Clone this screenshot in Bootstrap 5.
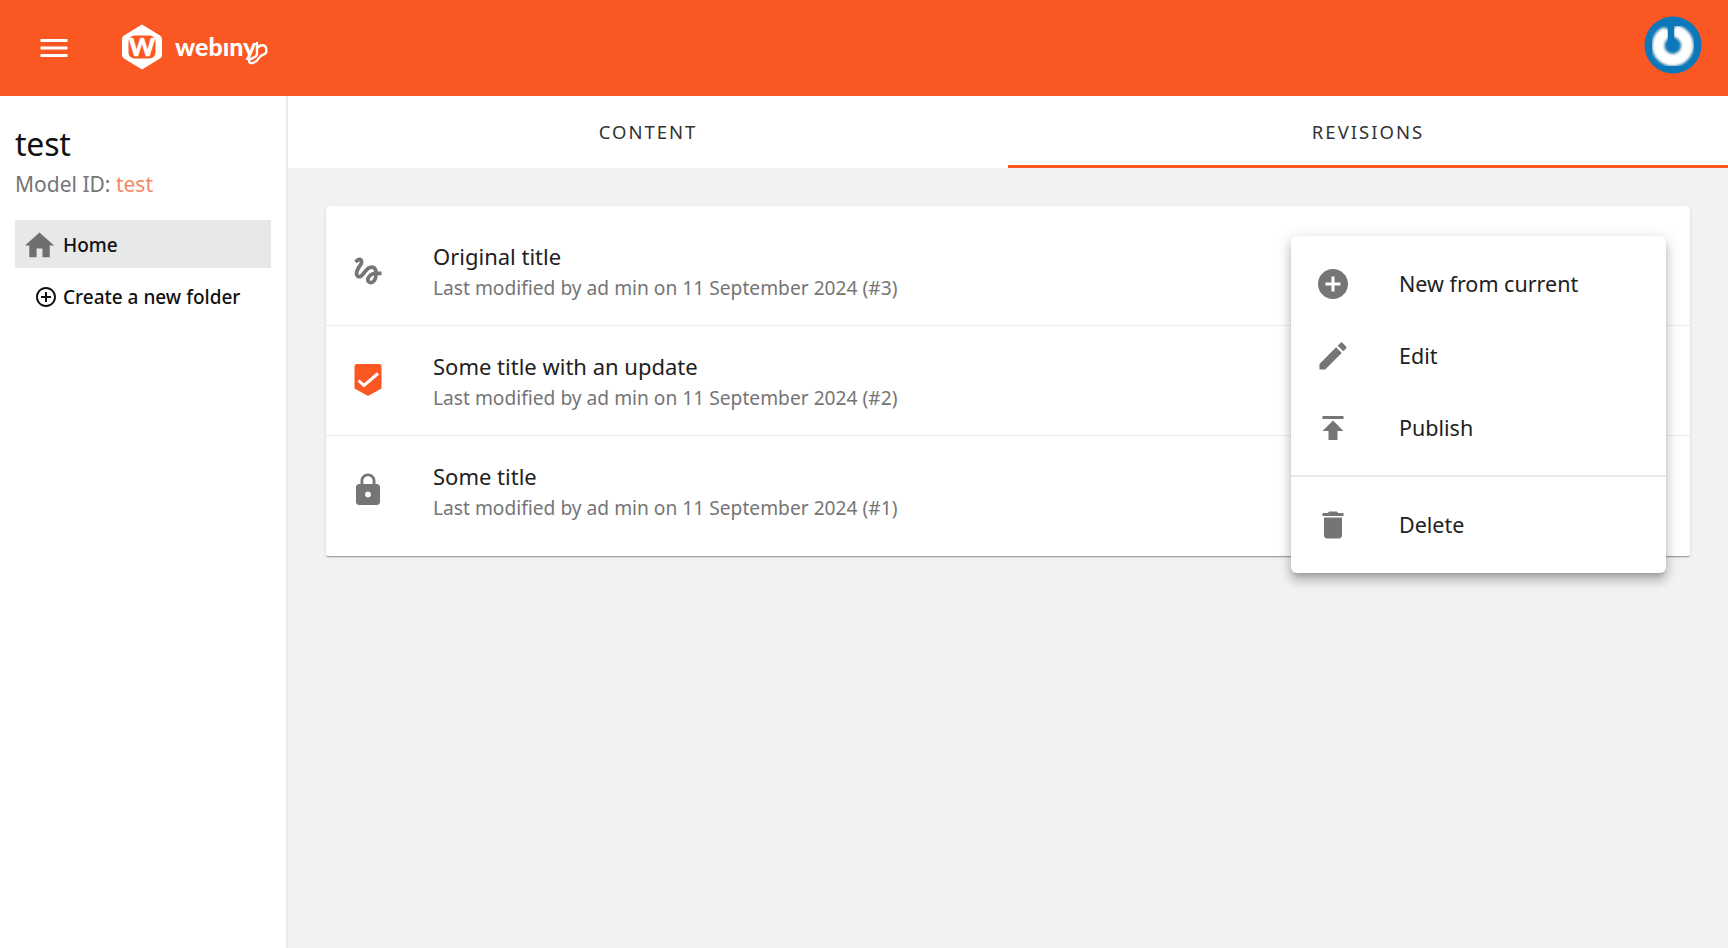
<!doctype html>
<html lang="en">
<head>
<meta charset="utf-8">
<title>Webiny</title>
<link href="https://cdn.jsdelivr.net/npm/bootstrap@5.3.0/dist/css/bootstrap.min.css" rel="stylesheet">
<style>
:root{--wb-orange:#fa5723;}
html,body{height:100%;}
body{font-family:"Noto Sans","Liberation Sans",sans-serif;background:#fff;color:#212121;overflow:hidden;}
.wb-top{height:96px;background:var(--wb-orange);padding-left:36px;padding-right:26px;}
.wb-burger{width:36px;height:36px;fill:#fff;}
.wb-logo{margin-left:47px;margin-top:-3px;gap:10px;}
.wb-hex{width:46px;height:46px;}
.wb-w{font-family:Lato,sans-serif;font-weight:900;font-size:25px;line-height:1;color:#fff;-webkit-text-stroke:.5px #fff;}
.wb-word{font-family:Lato,sans-serif;font-weight:900;font-size:25px;color:#fff;line-height:1;}
.wb-tail{margin-left:-22px;margin-top:10px;width:26px;height:26px;}
.wb-avatar{width:58px;height:58px;margin-top:-6px;}
.wb-side{width:288px;flex:0 0 288px;border-right:2px solid #e8e8e8;padding:26px 15px;}
.wb-name{font-size:32px;line-height:44px;color:#111;margin:0;letter-spacing:-.2px;}
.wb-model{font-size:21px;line-height:30px;color:#757575;margin-top:3px;}
.wb-model span{color:#f68767;}
.wb-home{height:48px;margin-top:21px;background:#e8e8e8;padding:2px 0 0 7px;font-size:19px;font-weight:500;color:#111;gap:6px;}
.wb-home svg{width:35px;height:35px;fill:#6f6f6f;}
.wb-folder{height:48px;margin-top:5px;padding-left:19px;font-size:19px;font-weight:500;color:#111;gap:5px;}
.wb-folder svg{width:24px;height:24px;fill:#111;}
.wb-main{background:#f2f2f2;min-width:0;}
.wb-tabs{height:72px;background:#fff;flex-wrap:nowrap;}
.wb-tabs .nav-link{height:72px;padding:2px 0 0;font-size:18.5px;letter-spacing:2px;color:#333;display:flex;align-items:center;justify-content:center;border-bottom:3px solid transparent;border-radius:0;}
.wb-tabs .nav-link.active{border-bottom-color:var(--wb-orange);color:#333;}
.wb-card{margin:38px 38px 0;border:0;border-radius:2px;padding:10px 0;box-shadow:0 2px 1px -1px rgba(0,0,0,.2),0 1px 1px 0 rgba(0,0,0,.14),0 1px 3px 0 rgba(0,0,0,.12);}
.wb-row{height:110px;padding:0 0 0 24px;border:0;border-bottom:2px solid #ececec;border-radius:0;gap:47px;}
.wb-row:last-child{border-bottom:0;padding-bottom:2px;}
.wb-ico{width:36px;height:36px;flex:none;fill:#757575;}
.wb-txt{padding-top:3px;}
.wb-t{font-size:22px;line-height:31px;color:#212121;}
.wb-s{font-size:19.2px;line-height:31px;color:#757575;}
.wb-menu{display:block;top:140px;left:1003px;width:375px;padding:12px 0 0;height:337px;margin:0;border:0;border-radius:6px;box-shadow:0 5px 5px -3px rgba(0,0,0,.2),0 8px 10px 1px rgba(0,0,0,.14),0 3px 14px 2px rgba(0,0,0,.12);}
.wb-menu .dropdown-item{height:72px;padding:0 0 0 24px;gap:48px;font-size:21.5px;color:#212121;}
.wb-menu .dropdown-divider{margin:11px 0 12px;border-color:#e8e8e8;border-top-width:2px;opacity:1;}
.wb-menu svg{width:36px;height:36px;flex:none;fill:#757575;}
</style>
</head>
<body class="d-flex flex-column">
<header class="wb-top d-flex align-items-center flex-none">
  <svg class="wb-burger" viewBox="0 0 24 24"><path d="M3 18h18v-2H3v2zm0-5h18v-2H3v2zm0-7v2h18V6H3z"/></svg>
  <div class="wb-logo d-flex align-items-center">
    <span class="position-relative d-inline-flex align-items-center justify-content-center wb-hex">
      <svg class="position-absolute top-0 start-0 wb-hex" viewBox="0 0 46 46"><path d="M23 .5 41 11.500Q43 12.700 43 15V31Q43 33.300 41 34.500L23 45.500 5 34.500Q3 33.300 3 31V15Q3 12.700 5 11.500Z" fill="#fff"/><rect x="9.500" y="11.500" width="27" height="23" rx="6" fill="#fa5723"/></svg>
      <span class="position-relative wb-w">W</span>
    </span>
    <span class="wb-word">webıny</span>
    <svg class="wb-tail" viewBox="0 0 26 26"><path d="M13 4V15C13 19 5 19 5 22C5 26 12 24 15 19C18 14 24 17 22 9C21 5 16 6 14.500 8" fill="none" stroke="#fff" stroke-width="2.400" stroke-linecap="round"/></svg>
  </div>
  <svg class="wb-avatar ms-auto" viewBox="0 0 58 58">
    <defs><filter id="wbsoft" x="-20%" y="-20%" width="140%" height="140%"><feGaussianBlur stdDeviation=".8"/></filter></defs>
    <circle cx="29" cy="29" r="28.500" fill="#0d78b9"/>
    <g filter="url(#wbsoft)">
      <path d="M20 18A14.500 14.500 0 1 0 34 16" fill="none" stroke="#d5dadd" stroke-width="13" stroke-linecap="round"/>
      <path d="M20 18A14.500 14.500 0 1 0 34 16" fill="none" stroke="#fff" stroke-width="10" stroke-linecap="round"/>
    </g>
    <path d="M27 8V31" stroke="#0d78b9" stroke-width="6.500"/>
  </svg>
</header>
<div class="d-flex flex-grow-1 position-relative">
  <aside class="wb-side">
    <h1 class="wb-name fw-normal">test</h1>
    <div class="wb-model">Model ID: <span>test</span></div>
    <div class="wb-home d-flex align-items-center">
      <svg viewBox="0 0 24 24"><path d="M10 20v-6h4v6h5v-8h3L12 3 2 12h3v8z"/></svg>Home
    </div>
    <div class="wb-folder d-flex align-items-center">
      <svg viewBox="0 0 24 24"><path d="M13 7h-2v4H7v2h4v4h2v-4h4v-2h-4V7zm-1-5C6.480 2 2 6.480 2 12s4.480 10 10 10 10-4.480 10-10S17.520 2 12 2zm0 18c-4.410 0-8-3.590-8-8s3.590-8 8-8 8 3.590 8 8-3.590 8-8 8z"/></svg>Create a new folder
    </div>
  </aside>
  <main class="wb-main flex-grow-1 position-relative">
    <ul class="nav nav-justified wb-tabs">
      <li class="nav-item"><a class="nav-link" href="#">CONTENT</a></li>
      <li class="nav-item"><a class="nav-link active" href="#">REVISIONS</a></li>
    </ul>
    <div class="card wb-card">
      <ul class="list-group list-group-flush">
        <li class="list-group-item wb-row d-flex align-items-center">
          <svg class="wb-ico" viewBox="0 0 24 24"><path d="M4.590 6.890c.7-.71 1.400-1.350 1.710-1.220.5.2 0 1.030-.3 1.520-.25.42-2.860 3.890-2.860 6.310 0 1.280.48 2.340 1.340 2.980.75.56 1.740.73 2.640.46 1.070-.31 1.950-1.400 3.060-2.770 1.210-1.490 2.830-3.440 4.080-3.440 1.630 0 1.650 1.010 1.760 1.790-3.780.64-5.380 3.670-5.380 5.370 0 1.700 1.440 3.090 3.210 3.090 1.630 0 4.290-1.330 4.690-6.100H21v-2.500h-2.470c-.15-1.650-1.090-4.200-4.030-4.200-2.250 0-4.180 1.910-4.940 2.840-.58.73-2.060 2.480-2.290 2.720-.25.3-.68.84-1.110.84-.45 0-.72-.83-.36-1.920.35-1.090 1.400-2.860 1.850-3.520.78-1.140 1.300-1.920 1.300-3.280C8.950 3.690 7.310 3 6.440 3 5.120 3 3.970 4 3.720 4.250c-.36.36-.66.66-.88.93l1.750 1.710zm9.290 11.660c-.31 0-.74-.26-.74-.72 0-.6.73-2.200 2.870-2.760-.3 2.690-1.430 3.480-2.130 3.480z"/></svg>
          <div class="wb-txt"><div class="wb-t">Original title</div><div class="wb-s">Last modified by ad min on 11 September 2024 (#3)</div></div>
        </li>
        <li class="list-group-item wb-row d-flex align-items-center">
          <svg class="wb-ico" viewBox="0 0 36 36"><path d="M7 1H29Q31.500 1 31.500 3.500V25.500L18 33 4.500 25.500V3.500Q4.500 1 7 1Z" fill="#fa5723"/><path d="M8.500 17.500 14 22.500 28 10.500" fill="none" stroke="#fff" stroke-width="3"/></svg>
          <div class="wb-txt"><div class="wb-t">Some title with an update</div><div class="wb-s">Last modified by ad min on 11 September 2024 (#2)</div></div>
        </li>
        <li class="list-group-item wb-row d-flex align-items-center">
          <svg class="wb-ico" viewBox="0 0 24 24"><path d="M18 8h-1V6c0-2.760-2.240-5-5-5S7 3.240 7 6v2H6c-1.100 0-2 .9-2 2v10c0 1.100.9 2 2 2h12c1.100 0 2-.9 2-2V10c0-1.100-.9-2-2-2zm-6 9c-1.100 0-2-.9-2-2s.9-2 2-2 2 .9 2 2-.9 2-2 2zm3.100-9H8.900V6c0-1.710 1.390-3.100 3.100-3.100 1.710 0 3.100 1.390 3.100 3.100v2z"/></svg>
          <div class="wb-txt"><div class="wb-t">Some title</div><div class="wb-s">Last modified by ad min on 11 September 2024 (#1)</div></div>
        </li>
      </ul>
    </div>
    <ul class="dropdown-menu wb-menu">
      <li><a class="dropdown-item d-flex align-items-center" href="#"><svg viewBox="0 0 24 24"><path d="M12 2C6.480 2 2 6.480 2 12s4.480 10 10 10 10-4.480 10-10S17.520 2 12 2zm5 11h-4v4h-2v-4H7v-2h4V7h2v4h4v2z"/></svg>New from current</a></li>
      <li><a class="dropdown-item d-flex align-items-center" href="#"><svg viewBox="0 0 24 24"><path d="M3 17.250V21h3.750L17.810 9.940l-3.750-3.750L3 17.250zM20.710 7.040c.39-.39.39-1.020 0-1.410l-2.340-2.340c-.39-.39-1.020-.39-1.410 0l-1.830 1.830 3.750 3.750 1.830-1.830z"/></svg>Edit</a></li>
      <li><a class="dropdown-item d-flex align-items-center" href="#"><svg viewBox="0 0 24 24"><path d="M5 4v2h14V4H5zm0 10h4v6h6v-6h4l-7-7-7 7z"/></svg>Publish</a></li>
      <li><hr class="dropdown-divider"></li>
      <li><a class="dropdown-item d-flex align-items-center" href="#"><svg viewBox="0 0 24 24"><path d="M6 19c0 1.100.9 2 2 2h8c1.100 0 2-.9 2-2V7H6v12zM19 4h-3.500l-1-1h-5l-1 1H5v2h14V4z"/></svg>Delete</a></li>
    </ul>
  </main>
</div>
<script src="https://cdn.jsdelivr.net/npm/bootstrap@5.3.0/dist/js/bootstrap.bundle.min.js"></script>
</body>
</html>
